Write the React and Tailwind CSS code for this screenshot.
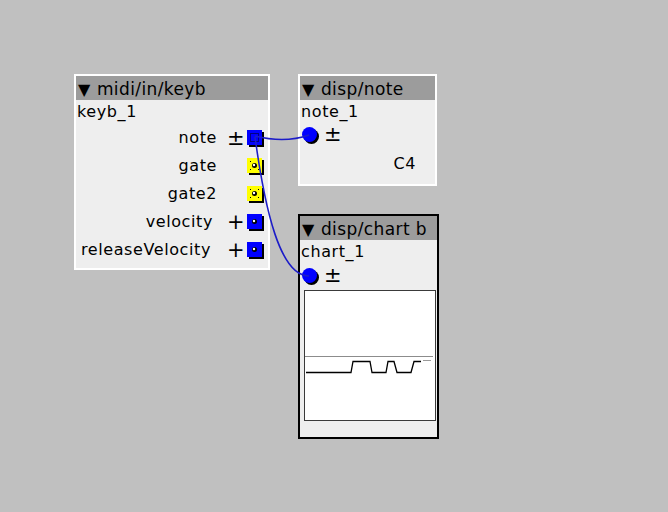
import React from 'react';

// Output port square (blue or yellow) with drop shadow
const OutPort = ({ color = '#0000ff', connected = false }) => (
    <svg width="17" height="17" viewBox="0 0 17 17" className="shrink-0">
        <rect x="2" y="2" width="15" height="15" fill="#000" />
        <rect x="0" y="0" width="15" height="15" fill={color} />
        {connected ? (
            <rect x="3.5" y="3.5" width="8" height="8" fill="none" stroke="#000" strokeWidth="1" strokeDasharray="1 1" />
        ) : (
            <>
                <circle cx="7.5" cy="7.5" r="2.5" fill="#000" />
                <circle cx="7" cy="7" r="1.2" fill="#fff" />
                {color !== '#0000ff' && (
                    <g fill="#000">
                        <rect x="3" y="3" width="1" height="1" />
                        <rect x="11" y="3" width="1" height="1" />
                        <rect x="3" y="11" width="1" height="1" />
                        <rect x="11" y="11" width="1" height="1" />
                    </g>
                )}
            </>
        )}
    </svg>
);

// Input port circle with drop shadow
const InPort = () => (
    <svg width="18" height="18" viewBox="0 0 18 18" className="shrink-0">
        <circle cx="9.5" cy="9.5" r="7.5" fill="#000" />
        <circle cx="7.5" cy="7.5" r="7.5" fill="#0000ff" />
    </svg>
);

const Header = ({ title }) => (
    <div className="h-6 bg-[#9c9c9c] flex items-center pt-[3px] pl-[2px] gap-[6px] whitespace-nowrap">
        <span className="text-[16px] leading-none">▼</span>
        <span className="text-[17px] tracking-[0.4px]">{title}</span>
    </div>
);

const outputs = [
    { name: 'note', sym: '±', color: '#0000ff', connected: true, mr: 'mr-[10px]' },
    { name: 'gate', sym: '', color: '#ffff00', mr: 'mr-[10px]' },
    { name: 'gate2', sym: '', color: '#ffff00', mr: 'mr-[10px]' },
    { name: 'velocity', sym: '+', color: '#0000ff', mr: 'mr-[14px]' },
    { name: 'releaseVelocity', sym: '+', color: '#0000ff', mr: 'mr-[16px]' },
];

export default function App() {
    return (
        <div
            className="relative w-[668px] h-[512px] bg-[#c0c0c0] overflow-hidden text-black text-[16px] tracking-[0.6px]"
            style={{ fontFamily: '"DejaVu Sans", sans-serif' }}
        >
            {/* midi/in/keyb */}
            <div className="absolute left-[74px] top-[74px] w-[196px] h-[196px] border-2 border-white bg-[#eeeeee]">
                <Header title="midi/in/keyb" />
                <div className="h-6 flex items-center pl-[1px]">keyb_1</div>
                {outputs.map((o) => (
                    <div key={o.name} className="h-7 flex items-center justify-end pr-[4px]">
                        <span className={o.mr}>{o.name}</span>
                        <span className="w-[16px] text-center leading-none text-[21px] tracking-normal">{o.sym}</span>
                        <span className="ml-[4px] flex">
                            <OutPort color={o.color} connected={o.connected} />
                        </span>
                    </div>
                ))}
            </div>

            {/* disp/note */}
            <div className="absolute left-[298px] top-[74px] w-[139px] h-[112px] border-2 border-white bg-[#eeeeee]">
                <Header title="disp/note" />
                <div className="h-6 flex items-center pl-[1px]">note_1</div>
                <div className="h-6 flex items-center pl-[2px] gap-[4px]">
                    <InPort />
                    <span className="text-[21px] leading-none -mt-[4px]">±</span>
                </div>
                <div className="h-8 flex items-center justify-end pr-[19px]">C4</div>
            </div>

            {/* disp/chart b */}
            <div className="absolute left-[298px] top-[214px] w-[141px] h-[225px] border-2 border-black bg-[#eeeeee]">
                <Header title="disp/chart b" />
                <div className="h-6 flex items-center pl-[1px]">chart_1</div>
                <div className="h-[26px] flex items-center pl-[2px] gap-[4px]">
                    <InPort />
                    <span className="text-[21px] leading-none -mt-[4px]">±</span>
                </div>
                <div className="ml-[4px] w-[132px] h-[131px] bg-white border border-[#3a3a3a]">
                    <svg width="130" height="129" viewBox="0 0 130 129">
                        <line x1="0" y1="65.5" x2="128" y2="65.5" stroke="#8c8c8c" strokeWidth="1" />
                        <polyline
                            points="1,81.5 46,81.5 48,70.5 65,70.5 67,81.5 81,81.5 83,70.5 89,70.5 92,81.5 106,81.5 109,70.5 116,70.5"
                            fill="none"
                            stroke="#000"
                            strokeWidth="1.3"
                        />
                        <line x1="118" y1="69.5" x2="126" y2="69.5" stroke="#9a9a9a" strokeWidth="1" />
                    </svg>
                </div>
            </div>

            {/* wires */}
            <svg className="absolute left-0 top-0 pointer-events-none" width="668" height="512">
                <path d="M255,136 C275,141 292,141 309,135" fill="none" stroke="#1c1cc8" strokeWidth="1.6" />
                <path d="M255,137 C265,210 280,276 309,276" fill="none" stroke="#1c1cc8" strokeWidth="1.6" />
            </svg>
        </div>
    );
}
